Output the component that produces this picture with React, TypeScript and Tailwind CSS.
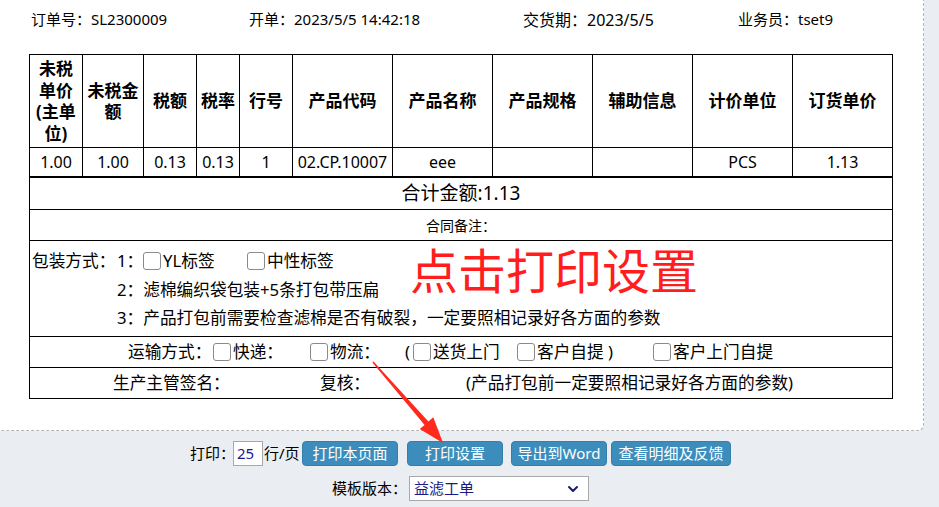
import { ChevronDown } from "lucide-react";

const headers = [
  ["未税", "单价", "(主单", "位)"],
  ["未税金", "额"],
  ["税额"],
  ["税率"],
  ["行号"],
  ["产品代码"],
  ["产品名称"],
  ["产品规格"],
  ["辅助信息"],
  ["计价单位"],
  ["订货单价"],
];

const row = ["1.00", "1.00", "0.13", "0.13", "1", "02.CP.10007", "eee", "", "", "PCS", "1.13"];

function Box() {
  return (
    <span className="inline-block h-[18px] w-[18px] shrink-0 rounded-[3px] border border-[#8a8a8a] bg-white" />
  );
}

function Btn({ label, w }: { label: string; w: string }) {
  return (
    <button
      className={`h-[25px] shrink-0 whitespace-nowrap ${w} rounded-[4px] border border-[#367fa9] bg-[#3c8dbc] text-[15px] leading-none text-white`}
    >
      {label}
    </button>
  );
}

export default function App() {
  return (
    <div className="relative h-[507px] w-[939px] overflow-hidden bg-[#eaedf1] font-['Noto_Sans','Noto_Sans_CJK_SC',sans-serif] text-black">
      {/* paper panel */}
      <div className="ml-[-3px] h-[431px] w-[927px] rounded-b-[6px] border-x border-b border-dashed border-[#b3b3b3] bg-white pl-[2px]">
        <div className="flex h-[39px] items-center pl-[31px] text-[15px]">
          <span className="w-[218px]">订单号：SL2300009</span>
          <span className="w-[274px]">开单：2023/5/5 14:42:18</span>
          <span className="w-[215px] text-[16px]">交货期：2023/5/5</span>
          <span>业务员：tset9</span>
        </div>

        <div className="ml-[29px] mt-[15px] w-[864px]">
          {/* item table */}
          <div className="grid grid-cols-[53px_61px_53px_43px_53px_repeat(6,100px)] border-y border-r border-black">
            {headers.map((lines, i) => (
              <div
                key={i}
                className="flex h-[92px] flex-col items-center justify-center border-l border-black text-center text-[17px] font-bold leading-[21.5px]"
              >
                {lines.map((l) => (
                  <span key={l} className="whitespace-nowrap">
                    {l}
                  </span>
                ))}
              </div>
            ))}
            {row.map((v, i) => (
              <div
                key={i}
                className="flex h-[29px] items-center justify-center overflow-visible whitespace-nowrap border-l border-t border-black text-[16px]"
              >
                {v}
              </div>
            ))}
          </div>

          {/* footer block */}
          <div className="border-x border-b border-black">
            <div className="flex h-[32px] items-center justify-center border-t border-black text-[19px]">
              合计金额:1.13
            </div>
            <div className="flex h-[31px] items-center justify-center border-t border-black text-[14px]">
              合同备注：
            </div>
            <div className="relative flex h-[96px] border-t border-black pl-[2px] pt-[6px] text-[16.7px] leading-[28.5px]">
              <div className="w-[85px] shrink-0">包装方式：</div>
              <div className="flex flex-col">
                <div className="flex items-center">
                  <span className="w-[26px] shrink-0">1：</span>
                  <Box />
                  <span className="ml-[2px] w-[84px] shrink-0">YL标签</span>
                  <Box />
                  <span className="ml-[2px]">中性标签</span>
                </div>
                <div>2：滤棉编织袋包装+5条打包带压扁</div>
                <div className="whitespace-nowrap">3：产品打包前需要检查滤棉是否有破裂，一定要照相记录好各方面的参数</div>
              </div>
              <div className="absolute left-[380px] top-[6px] text-[48px] leading-none text-[#ff1d1d]">
                点击打印设置
              </div>
            </div>
            <div className="flex h-[31px] items-center whitespace-nowrap border-t border-black pl-[98px] text-[16.7px]">
              <span className="w-[85px] shrink-0">运输方式：</span>
              <Box />
              <span className="w-[79px] shrink-0 pl-[2px]">快递：</span>
              <Box />
              <span className="w-[77px] shrink-0 pl-[2px]">物流：</span>
              <span className="w-[8px] shrink-0">(</span>
              <Box />
              <span className="w-[86px] shrink-0 pl-[2px]">送货上门</span>
              <Box />
              <span className="w-[118px] shrink-0 pl-[2px]">客户自提 )</span>
              <Box />
              <span className="pl-[2px]">客户上门自提</span>
            </div>
            <div className="flex h-[31px] items-center whitespace-nowrap border-t border-black pl-[83px] text-[16.7px]">
              <span className="w-[207px] shrink-0">生产主管签名：</span>
              <span className="w-[146px] shrink-0">复核：</span>
              <span>(产品打包前一定要照相记录好各方面的参数)</span>
            </div>
          </div>
        </div>
      </div>

      {/* print controls */}
      <div className="pt-[10px] text-[15px]">
        <div className="flex h-[25px] items-center whitespace-nowrap pl-[190px]">
          <span className="w-[43px] shrink-0">打印：</span>
          <span className="flex h-[25px] w-[30px] shrink-0 items-center border border-[#a9a9a9] bg-white pl-[3px] text-[#1a1a86]">
            25
          </span>
          <span className="ml-[1px] w-[38px] shrink-0">行/页</span>
          <Btn label="打印本页面" w="w-[96px]" />
          <span className="w-[9px] shrink-0" />
          <Btn label="打印设置" w="w-[96px]" />
          <span className="w-[8px] shrink-0" />
          <Btn label="导出到Word" w="w-[96px]" />
          <span className="w-[4px] shrink-0" />
          <Btn label="查看明细及反馈" w="w-[120px]" />
        </div>
        <div className="mt-[10px] flex h-[25px] items-center whitespace-nowrap pl-[332px]">
          <span className="w-[77px] shrink-0">模板版本：</span>
          <div className="flex h-[25px] w-[180px] shrink-0 items-center justify-between border border-[#a9a9a9] bg-white pl-[4px] pr-[7px] text-[#1a1a86]">
            <span>益滤工单</span>
            <ChevronDown size={16} strokeWidth={3} color="#1a1a70" />
          </div>
        </div>
      </div>

      {/* red arrow */}
      <svg className="pointer-events-none absolute left-0 top-0" width="939" height="507" viewBox="0 0 939 507">
        <polygon
          points="372.4,362.5 373.6,361.5 428.4,421.6 433.3,417.3 443,443 419.7,429.1 424.6,424.9"
          fill="#ff2a1e"
        />
      </svg>
    </div>
  );
}
